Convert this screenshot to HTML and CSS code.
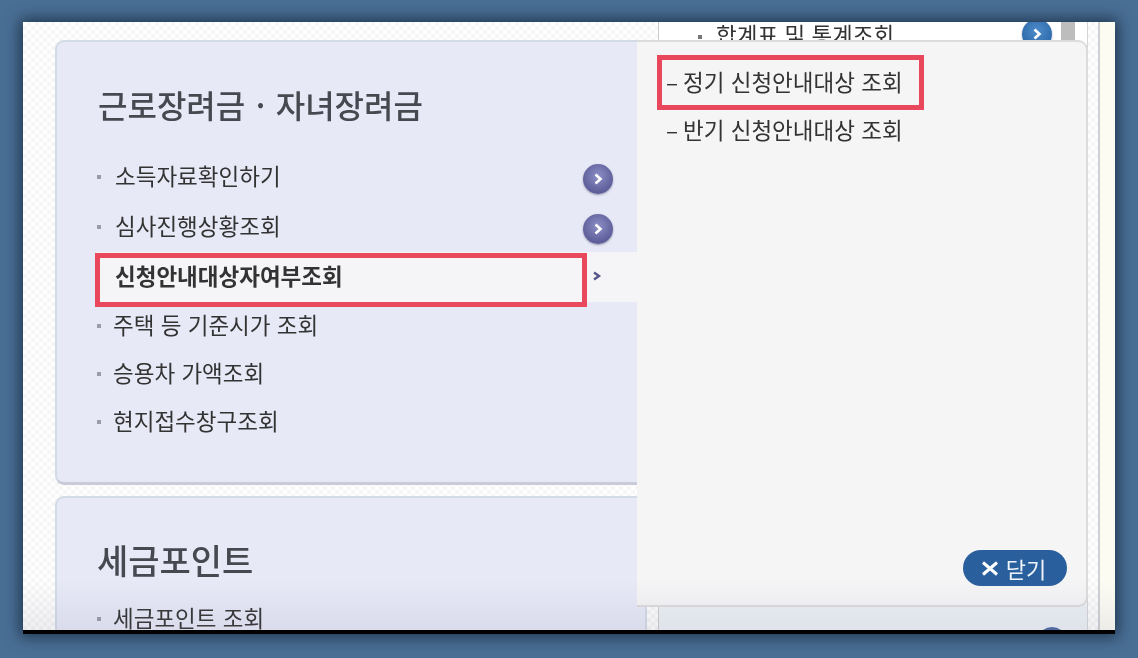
FILE: index.html
```html
<!DOCTYPE html>
<html lang="ko">
<head>
    <meta charset="UTF-8">
    <title>근로장려금 · 자녀장려금</title>
    <link rel="stylesheet" href="styles.css">
</head>
<body>
    <div class="window">
        <div class="columns">
            <div class="col-left">
                <section class="card card-first">
                    <h2>근로장려금 · 자녀장려금</h2>
                    <ul class="menu">
                        <li class="row"><span class="dot"></span><span class="label">소득자료확인하기</span><span class="go"><svg width="12" height="12" viewBox="0 0 12 12"><path d="M3.5 1.5 8.5 6 3.5 10.5" fill="none" stroke="#fff" stroke-width="2.6"/></svg></span></li>
                        <li class="row"><span class="dot"></span><span class="label">심사진행상황조회</span><span class="go"><svg width="12" height="12" viewBox="0 0 12 12"><path d="M3.5 1.5 8.5 6 3.5 10.5" fill="none" stroke="#fff" stroke-width="2.6"/></svg></span></li>
                        <li class="row row-active"><span class="label">신청안내대상자여부조회</span><svg class="chev" width="10" height="10" viewBox="0 0 10 10"><path d="M2 1.5 7 5 2 8.5" fill="none" stroke="#55558c" stroke-width="2.4"/></svg></li>
                        <li class="row row-short"><span class="dot"></span><span class="label">주택 등 기준시가 조회</span></li>
                        <li class="row row-short"><span class="dot"></span><span class="label">승용차 가액조회</span></li>
                        <li class="row row-short"><span class="dot"></span><span class="label">현지접수창구조회</span></li>
                    </ul>
                </section>
                <section class="card card-second">
                    <h2>세금포인트</h2>
                    <ul class="menu">
                        <li class="row row-short"><span class="dot"></span><span class="label">세금포인트 조회</span></li>
                    </ul>
                </section>
            </div>
            <div class="col-right">
                <div class="behind-top">
                    <span class="dot"></span><span class="behind-label">합계표 및 통계조회</span>
                    <span class="go go-blue"><svg width="12" height="12" viewBox="0 0 12 12"><path d="M3.5 1.5 8.5 6 3.5 10.5" fill="none" stroke="#fff" stroke-width="2.6"/></svg></span>
                    <span class="scrollbar"></span>
                </div>
                <div class="behind-bottom"><span class="go-peek"></span></div>
            </div>
            <div class="rail"></div>
            <div class="edge"></div>
        </div>

        <div class="popup">
            <ul class="submenu">
                <li><span class="dash">–</span>정기 신청안내대상 조회</li>
                <li><span class="dash">–</span>반기 신청안내대상 조회</li>
            </ul>
            <button class="close"><svg width="18" height="15" viewBox="0 0 18 15"><path d="M2 1.5 16 13.5M16 1.5 2 13.5" fill="none" stroke="#fff" stroke-width="3"/></svg>닫기</button>
        </div>

        <div class="mark mark-row"></div>
        <div class="mark mark-sub"></div>
        <div class="fade"></div>
    </div>
</body>
</html>
```

FILE: styles.css
```css
* {
    box-sizing: border-box;
}
html, body {
    height: 100%;
}
body {
    margin: 0;
    padding: 22px 23px 24px;
    overflow: hidden;
    background-color: #4a6f95;
    font-family: "Noto Sans CJK KR", "Noto Sans", sans-serif;
    color: #333;
}
ul {
    list-style: none;
    margin: 0;
    padding: 0;
}
.window {
    position: relative;
    height: 612px;
    border-bottom: 4px solid #000;
    background-color: #fff;
    box-shadow: 0 0 14px 3px rgba(16, 34, 54, 0.75);
    overflow: hidden;
    filter: blur(0.4px);
}
.columns {
    display: flex;
    height: 100%;
    padding-left: 32px;
    background-color: #fff;
    background-image: repeating-conic-gradient(#f6f6f6 0 25%, #fff 0 50%);
    background-size: 8px 8px;
}
.col-left {
    width: 592px;
    padding-top: 18px;
}
.card {
    border: 2px solid #d3dbe6;
    border-radius: 9px;
    background-color: #e8e9f7;
}
.card-first {
    height: 445px;
    padding: 37px 0 0 41px;
    border-bottom-width: 3px;
    border-bottom-color: #c9ccd8;
}
.card-second {
    height: 200px;
    margin-top: 11px;
    padding: 37px 0 0 40px;
}
.card h2 {
    margin: 0;
    height: 50px;
    font-size: 32px;
    line-height: 50px;
    font-weight: 500;
    word-spacing: 1.5px;
    color: #484850;
}
.card-second h2 {
    font-size: 34px;
}
.card-first .menu {
    margin: 23px 0 0 -2px;
}
.card-second .menu {
    margin: 10px 0 0 -1px;
}
.row {
    display: flex;
    align-items: center;
    height: 50px;
    font-size: 22.5px;
    color: #333;
}
.row-short {
    height: 48px;
}
.dot {
    flex: none;
    width: 4px;
    height: 4px;
    margin: 0 14px 0 1px;
    background-color: #9a9aa8;
}
.row .label {
    width: 468px;
    padding-bottom: 4px;
}
.row-short .label {
    margin-left: -2px;
}
.go {
    display: flex;
    align-items: center;
    justify-content: center;
    flex: none;
    width: 30px;
    height: 30px;
    margin-top: 3px;
    border-radius: 50%;
    background: radial-gradient(circle at 50% 40%, #8c8fc6, #5a5a96 75%, #4a4a80);
    box-shadow: 0 1px 2px rgba(60, 60, 90, 0.5);
}
.row-active {
    background-color: #f5f5f7;
}
.row-active .label {
    width: 496px;
    padding-left: 19px;
    font-weight: 700;
}
.chev {
    margin-top: -2px;
}
.col-right {
    position: relative;
    display: flex;
    flex-direction: column;
    justify-content: space-between;
    width: 429px;
    margin-left: 11px;
    border-left: 1px solid #ccc;
}
.behind-top {
    display: flex;
    align-items: center;
    height: 24px;
    padding-left: 39px;
    background-color: #fff;
}
.behind-label {
    font-size: 22.5px;
    line-height: 24px;
    color: #333;
}
.behind-top .dot {
    width: 4px;
    height: 4px;
    margin: 6px 14px 0 0;
    background-color: #777;
}
.go-blue {
    margin: 0 0 0 128px;
    background: radial-gradient(circle at 50% 40%, #4d8ccb, #2c69aa 75%);
}
.scrollbar {
    width: 14px;
    height: 24px;
    margin-left: 9px;
    background-color: #bdbdbd;
}
.behind-bottom {
    position: relative;
    height: 30px;
    background: linear-gradient(#eaeff4, #eef2f6);
}
.go-peek {
    position: absolute;
    right: 20px;
    bottom: -27px;
    width: 30px;
    height: 30px;
    border-radius: 50%;
    background-color: #4a6aa5;
}
.rail {
    flex: none;
    width: 13px;
    border-right: 2px solid #cfd0d4;
    border-left: 1px solid #d4d4d8;
}
.edge {
    flex: 1;
    background-color: #fdfcf3;
}
.popup {
    position: absolute;
    top: 18px;
    left: 614px;
    width: 451px;
    height: 567px;
    border: solid #dcdcdc;
    border-width: 2px 2px 2px 0;
    border-radius: 0 10px 10px 0;
    background-color: #f5f5f6;
    padding: 15px 0 0 29px;
}
.submenu li {
    display: flex;
    height: 48px;
    font-size: 22.5px;
    line-height: 48px;
    white-space: pre;
    color: #333;
}
.dash {
    width: 17px;
}
.close {
    position: absolute;
    right: 19px;
    bottom: 19px;
    display: flex;
    align-items: center;
    justify-content: center;
    gap: 7px;
    width: 104px;
    height: 36px;
    padding: 0 3px 0 0;
    border: none;
    border-radius: 18px;
    background-color: #2a5f9e;
    color: #eef3f9;
    font-family: inherit;
    font-size: 22px;
    cursor: pointer;
}
.mark {
    position: absolute;
    border: 5px solid #e8475c;
}
.mark-row {
    top: 231px;
    left: 72px;
    width: 492px;
    height: 54px;
}
.mark-sub {
    top: 33px;
    left: 634px;
    width: 267px;
    height: 55px;
}
.fade {
    position: absolute;
    left: 0;
    right: 0;
    bottom: 0;
    height: 50px;
    background: linear-gradient(rgba(120, 120, 150, 0), rgba(120, 120, 150, 0.12));
    pointer-events: none;
}
```
